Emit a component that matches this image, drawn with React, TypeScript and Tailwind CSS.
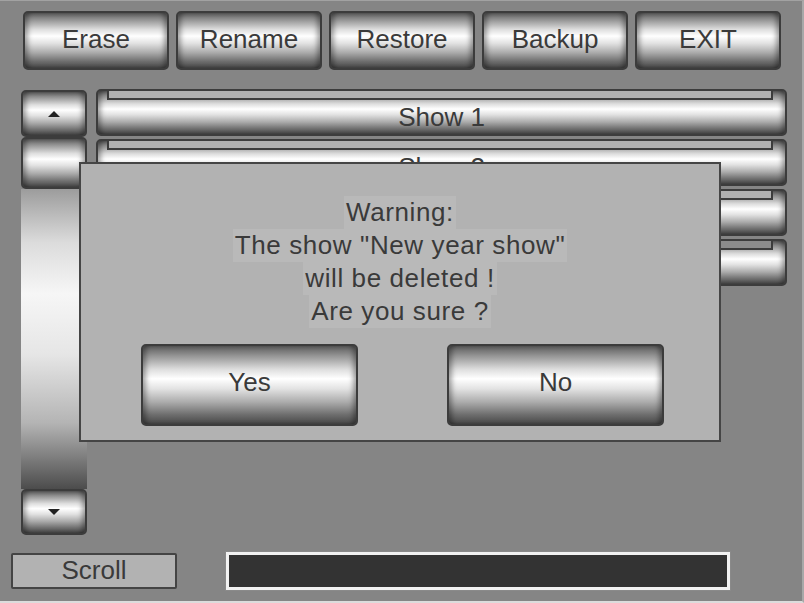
import React from 'react';

const metal =
  'bg-[linear-gradient(to_bottom,#5c5c5c_0%,#929292_12%,#dedede_30%,#ffffff_42%,#e2e2e2_55%,#ababab_72%,#6e6e6e_88%,#474747_100%)] shadow-[inset_5px_0_5px_-2px_rgba(0,0,0,0.35),inset_-5px_0_5px_-2px_rgba(0,0,0,0.35)]';

const TopButton: React.FC<{ label: string }> = ({ label }) => (
  <div
    className={`w-[146px] h-[59px] rounded-[5px] border-2 border-[#3c3c3c] flex items-center justify-center pb-[3px] text-[26px] text-[#3a3a3a] ${metal}`}
  >
    {label}
  </div>
);

const ShowRow: React.FC<{ label?: string; strip?: string }> = ({ label, strip = 'bg-[#b0b0b0]' }) => (
  <div className={`h-[47px] rounded-[5px] border-2 border-[#3c3c3c] flex flex-col ${metal}`}>
    <div className={`h-[9px] ml-[9px] mr-[12px] border-x-2 border-b-2 border-[#3c3c3c] ${strip}`} />
    <div className="flex-1 flex items-center justify-center text-[26px] text-[#3a3a3a] leading-none">{label}</div>
  </div>
);

const Arrow: React.FC<{ down?: boolean }> = ({ down }) => (
  <svg width="14" height="8" viewBox="0 0 14 8">
    {down ? <polygon points="1,1 13,1 7,7" fill="#222" /> : <polygon points="7,1 13,7 1,7" fill="#222" />}
  </svg>
);

export default function App() {
  return (
    <div className="relative w-[804px] h-[603px] overflow-hidden bg-[#858585] border-t border-t-[#a2a2a2] border-r-2 border-r-[#a8a8a8] border-b-2 border-b-[#dcdcdc] font-['Liberation_Sans',Arial,sans-serif]">
      {/* Top buttons */}
      <div className="flex gap-[7px] pl-[23px] pt-[10px]">
        {['Erase', 'Rename', 'Restore', 'Backup', 'EXIT'].map((b) => (
          <TopButton key={b} label={b} />
        ))}
      </div>

      {/* Main area */}
      <div className="flex gap-[9px] pl-[21px] mt-[19px] h-[446px]">
        {/* Scrollbar */}
        <div className="w-[66px] flex flex-col pt-[1px]">
          <div className={`h-[47px] rounded-[5px] border-2 border-[#3c3c3c] flex items-center justify-center ${metal}`}>
            <Arrow />
          </div>
          <div className={`h-[52px] rounded-[5px] border-2 border-[#3c3c3c] ${metal}`} />
          <div className="flex-1 bg-[linear-gradient(to_bottom,#9c9c9c_0%,#dcdcdc_18%,#f6f6f6_35%,#e6e6e6_55%,#b4b4b4_78%,#4c4c4c_100%)]" />
          <div className={`h-[46px] rounded-[5px] border-2 border-[#3c3c3c] flex items-center justify-center ${metal}`}>
            <Arrow down />
          </div>
        </div>

        {/* Show list */}
        <div className="w-[691px] flex flex-col gap-[3px]">
          <ShowRow label="Show 1" />
          <ShowRow label="Show 2" />
          <ShowRow />
          <ShowRow strip="bg-[#8c8c8c]" />
        </div>
      </div>

      {/* Bottom bar */}
      <div className="flex items-center pl-[11px] mt-[17px]">
        <div className="w-[166px] h-[36px] rounded-[2px] border-2 border-[#444] bg-[#b2b2b2] flex items-center justify-center pb-[2px] text-[26px] text-[#3a3a3a] leading-none">
          Scroll
        </div>
        <div className="ml-[49px] w-[504px] h-[38px] border-[3px] border-[#f2f2f2] bg-[#333] outline outline-1 outline-[#8a8a8a]" />
      </div>

      {/* Confirmation dialog */}
      <div className="absolute left-[79px] top-[161px] w-[642px] h-[280px] bg-[#b2b2b2] border-2 border-[#454545] flex flex-col items-center pt-[32px]">
        <div className="flex flex-col items-center text-[26px] leading-[33px] tracking-[0.6px] text-[#3a3a3a]">
          <span className="bg-[#b9b9b9] px-[2px]">Warning:</span>
          <span className="bg-[#b9b9b9] px-[2px]">The show "New year show"</span>
          <span className="bg-[#b9b9b9] px-[2px]">will be deleted !</span>
          <span className="bg-[#b9b9b9] px-[2px]">Are you sure ?</span>
        </div>
        <div className="flex gap-[89px] mt-[16px] pl-[5px]">
          <div className={`w-[217px] h-[82px] rounded-[5px] border-2 border-[#3c3c3c] flex items-center justify-center pb-[5px] text-[26px] text-[#3a3a3a] ${metal}`}>
            Yes
          </div>
          <div className={`w-[217px] h-[82px] rounded-[5px] border-2 border-[#3c3c3c] flex items-center justify-center pb-[5px] text-[26px] text-[#3a3a3a] ${metal}`}>
            No
          </div>
        </div>
      </div>
    </div>
  );
}
